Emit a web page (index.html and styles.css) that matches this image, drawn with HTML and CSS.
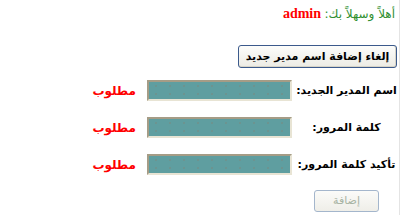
FILE: index.html
```html
<!DOCTYPE html>
<html lang="ar" dir="rtl">
<head>
  <meta charset="UTF-8" />
  <title>إضافة مدير</title>
  <link rel="stylesheet" href="styles.css">
</head>
<body>
  <div class="page">
    <p class="greet"><span class="hello">أهلاً وسهلاً بك:</span> <b class="user">admin</b></p>

    <div class="actions">
      <button class="btn cancel">إلغاء إضافة اسم مدير جديد</button>
    </div>

    <form class="form">
      <div class="row">
        <label class="lbl">اسم المدير الجديد:</label>
        <input type="text" class="field" />
        <span class="req">مطلوب</span>
      </div>
      <div class="row">
        <label class="lbl">كلمة المرور:</label>
        <input type="password" class="field" />
        <span class="req">مطلوب</span>
      </div>
      <div class="row">
        <label class="lbl">تأكيد كلمة المرور:</label>
        <input type="password" class="field" />
        <span class="req">مطلوب</span>
      </div>
      <div class="row submit-row">
        <div class="lbl">
          <button class="btn submit" disabled>إضافة</button>
        </div>
      </div>
    </form>
  </div>
</body>
</html>
```

FILE: styles.css
```css
* {
  box-sizing: border-box;
  margin: 0;
  padding: 0;
}

body {
  background: #fff;
  font-family: "DejaVu Sans", sans-serif;
  font-size: 11px;
  color: #000;
}

.page {
  padding: 5px 3px 0 0;
  border-right: 1px solid #e4e4e4;
  width: 399px;
  height: 215px;
}

.greet {
  padding-right: 1px;
  height: 18px;
  line-height: 18px;
  white-space: nowrap;
}

.hello {
  color: #2f8f2f;
  font-size: 12px;
}

.user {
  color: #ff0000;
  font-family: "Liberation Serif", serif;
  font-size: 14px;
}

.actions {
  margin-top: 22px;
  display: flex;
}

.btn {
  font-family: "DejaVu Sans", sans-serif;
  font-size: 11px;
  border-radius: 3px;
  white-space: nowrap;
  cursor: pointer;
}

.cancel {
  width: 159px;
  height: 23px;
  margin-right: -1px;
  font-weight: bold;
  color: #000;
  border: 1px solid #3c5a8c;
  background: linear-gradient(#fdfdfb, #ecebe4);
  box-shadow: inset 0 -1px 0 #d6d3c6, inset -1px 0 0 #d6d3c6;
}

.form {
  margin-top: 12px;
}

.row {
  display: flex;
  align-items: center;
  height: 21px;
  margin-bottom: 16px;
}

.lbl {
  width: 101px;
  flex: none;
  text-align: center;
  font-weight: bold;
  white-space: nowrap;
  margin-right: -1px;
}

.field {
  width: 145px;
  height: 21px;
  margin-right: 4px;
  background-color: #5f9ea0;
  background-image: radial-gradient(circle, rgba(150, 110, 90, 0.7) 0.5px, transparent 0.8px);
  background-size: 14px 8px;
  border: 2px solid;
  border-color: #a59c86 #e8e4d4 #e8e4d4 #a59c86;
}

.req {
  margin-right: 11px;
  color: #ff0000;
  font-weight: bold;
  font-size: 12px;
}

.submit-row {
  margin-top: -1px;
}

.submit {
  width: 65px;
  height: 22px;
  color: #a8b4a4;
  border: 1px solid #a4b6cc;
  background: linear-gradient(#fbfbf9, #efeee8);
  cursor: default;
}
```
